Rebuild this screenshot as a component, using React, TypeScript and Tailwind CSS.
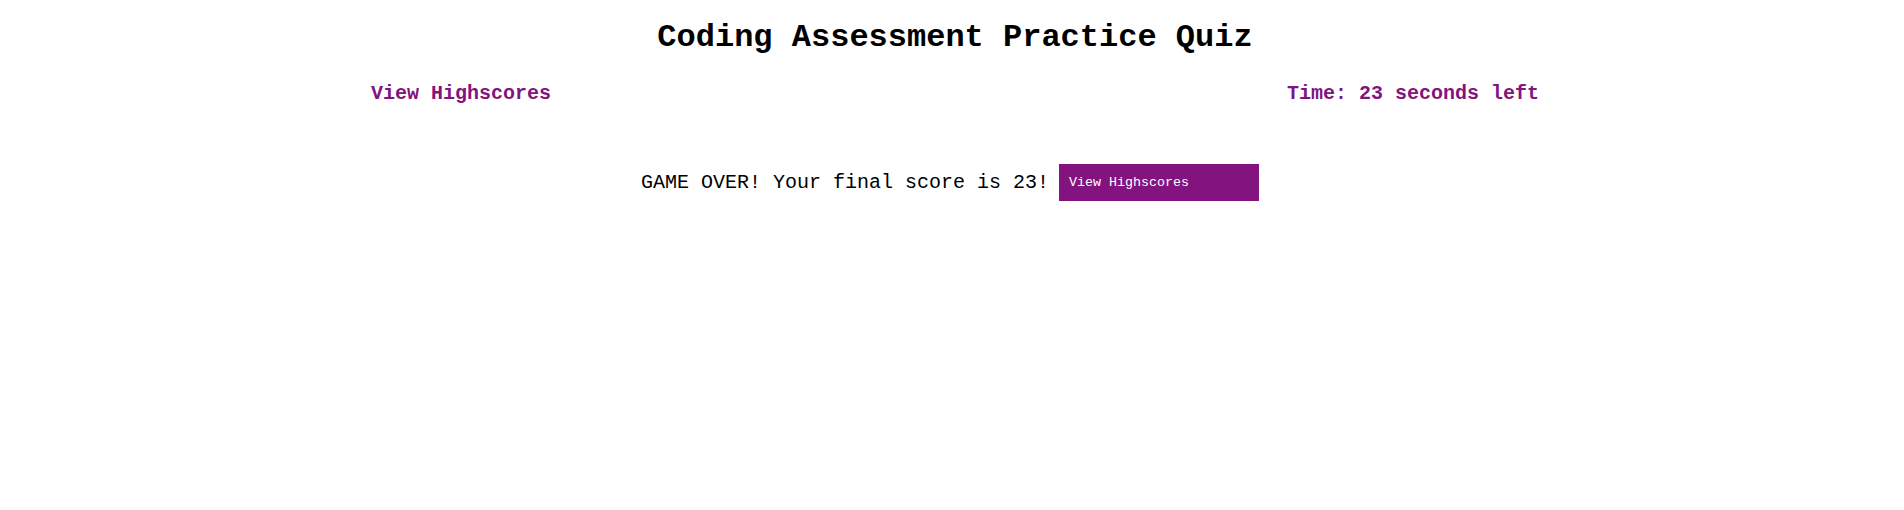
import React from "react";

export default function App() {
  return (
    <div
      className="w-[1904px] h-[510px] bg-white flex flex-col"
      style={{ fontFamily: '"Liberation Mono", "DejaVu Sans Mono", monospace' }}
    >
      <h1 className="mt-[18px] pl-[6px] text-center text-[32px] leading-[40px] font-bold text-black">
        Coding Assessment Practice Quiz
      </h1>
      <div className="mt-[22px] flex justify-between pl-[371px] pr-[365px] text-[20px] leading-[28px] font-bold text-[#82137f]">
        <span>View Highscores</span>
        <span>Time: 23 seconds left</span>
      </div>
      <div className="mt-[56px] flex items-center justify-center gap-[10px] pr-[4px]">
        <span className="text-[20px] leading-[28px] text-black">
          GAME OVER! Your final score is 23!
        </span>
        <button className="w-[200px] h-[37px] bg-[#82137f] text-white text-[13.33px] text-left pl-[10px]">
          View Highscores
        </button>
      </div>
    </div>
  );
}
